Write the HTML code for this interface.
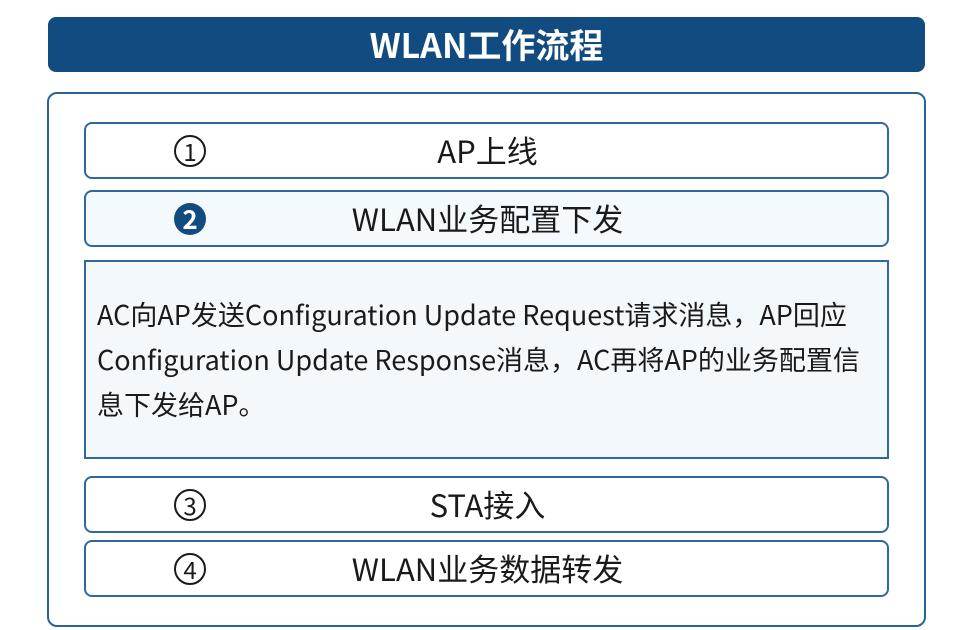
<!DOCTYPE html>
<html><head><meta charset="utf-8"><style>
body{margin:0;width:954px;height:630px;background:#fff;position:relative;overflow:hidden;font-family:"Noto Sans CJK SC","Liberation Sans",sans-serif;color:#1a1a1a}
.hdr{position:absolute;left:48px;top:17px;width:877px;height:55px;background:#114b7f;border-radius:8px;color:#fff;font-size:34px;font-weight:bold;text-align:center;line-height:54px}
.outer{position:absolute;left:47px;top:92px;width:875px;height:531px;border:2px solid #2c6396;border-radius:10px}
.it{position:absolute;left:84px;width:801px;height:53px;border:2px solid #2f68a0;border-radius:8px;background:#fff;font-size:31px;line-height:52px}
.it .t{position:absolute;left:0;right:0;top:0;text-align:center;padding-left:2px}
.c{position:absolute;left:88px;top:11px;width:28px;height:28px;border:2px solid #1a1a1a;border-radius:50%;font-size:24px;line-height:28px;text-align:center}
.n2{position:absolute;left:88px;top:11px;width:32px;height:32px;border-radius:50%;background:#114b7f;color:#fff;font-size:26px;line-height:32px;text-align:center;font-weight:bold}
.det{position:absolute;left:84px;top:260px;border:2px solid #2f68a0;background:#f3f8fd;font-size:27px;line-height:45px;padding:29px 0 0 11px;box-sizing:border-box;width:805px;height:199px;white-space:nowrap}
</style></head><body>
<div class="hdr">WLAN工作流程</div>
<div class="outer"></div>
<div class="it" style="top:122px"><span class="c">1</span><span class="t">AP上线</span></div>
<div class="it" style="top:190px;background:#f3f9fd"><span class="n2">2</span><span class="t">WLAN业务配置下发</span></div>
<div class="det">AC向AP发送Configuration Update Request请求消息，AP回应<br>Configuration Update Response消息，AC再将AP的业务配置信<br>息下发给AP。</div>
<div class="it" style="top:476px"><span class="c">3</span><span class="t">STA接入</span></div>
<div class="it" style="top:540px"><span class="c">4</span><span class="t">WLAN业务数据转发</span></div>
</body></html>
